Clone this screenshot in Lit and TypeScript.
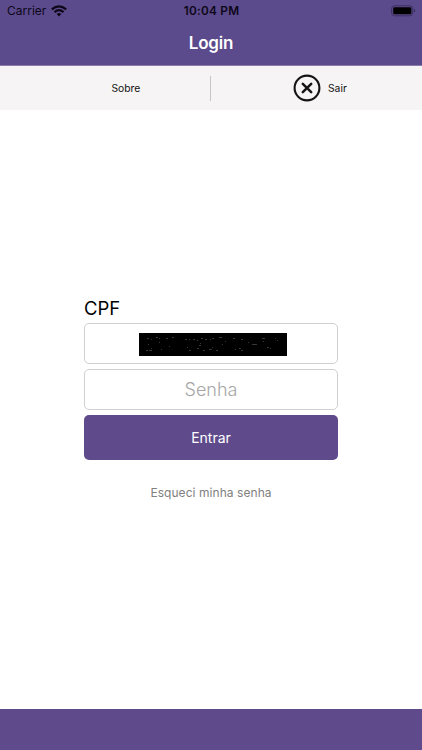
import { LitElement, html, css, svg } from "lit";
import { customElement } from "lit/decorators.js";

// Faint flecks on the masked CPF value: x, y, width.
const FLECKS = [
  [8, 5, 2], [12, 6, 1], [17, 4, 2], [20, 5, 1], [27, 5, 2], [33, 4, 2], [9, 11, 1], [20, 9, 1],
  [7, 17, 2], [10, 17, 3], [12, 15, 1], [22, 16, 1], [30, 13, 1], [46, 6, 2], [50, 6, 1],
  [54, 6, 2], [58, 7, 1], [62, 5, 2], [66, 6, 2], [71, 6, 1], [73, 5, 2], [80, 4, 3],
  [48, 14, 1], [50, 17, 2], [58, 15, 2], [60, 12, 2], [61, 10, 1], [64, 17, 2], [70, 16, 3],
  [73, 14, 1], [77, 17, 2], [83, 11, 1], [86, 8, 1], [94, 5, 2], [96, 16, 1], [102, 6, 2],
  [100, 15, 2], [102, 17, 2], [109, 9, 1], [113, 11, 3], [116, 11, 2], [123, 5, 3],
  [124, 8, 1], [128, 14, 2], [131, 15, 1], [136, 5, 1], [138, 7, 1],
];

@customElement("app-root")
export class AppRoot extends LitElement {
  static styles = css`
    :host { display: flex; flex-direction: column; height: 750px; background: #fff;
      font-family: Inter, "Liberation Sans", sans-serif; color: #000; line-height: 1; overflow: hidden; }
    .header { height: 65px; background: #5c4b8c; border-bottom: 1px solid #8c7cad; box-sizing: content-box; flex: none; }
    .status { display: grid; grid-template-columns: 1fr auto 1fr; height: 22px; align-items: center; padding: 0 6px 0 7px; color: #0c0718; }
    .carrier { display: flex; align-items: center; gap: 5px; font-size: 12px; }
    .time { font-size: 11.8px; font-weight: 600; letter-spacing: .25px; padding-top: 2px; }
    .battery { justify-self: end; display: block; }
    .wifi { display: block; }
    .title { margin: 0; text-align: center; font-size: 17px; font-weight: 600; line-height: 42px; color: #fff; letter-spacing: -.2px; }
    .toolbar { display: grid; grid-template-columns: 210px 1px 211px; align-items: center; height: 44px; flex: none; background: #f6f4f5; font-size: 10.3px; color: #111; }
    .sobre { padding: 1px 0 0 111.5px; }
    .divider { height: 25px; background: #c7c5c6; }
    .sair { display: flex; align-items: center; padding-left: 82px; gap: 7px; }
    .exit { padding-top: 1px; }
    .close { display: block; }
    .main { flex: 1; display: flex; flex-direction: column; align-items: center; padding-top: 187px; }
    .form { width: 254px; display: flex; flex-direction: column; }
    .label { font-size: 18.5px; line-height: 23px; height: 26px; }
    .field { box-sizing: border-box; height: 41px; border: 1px solid #d0d0d0; border-radius: 5px; display: flex; align-items: center; justify-content: center; margin-bottom: 5px; font-size: 18px; font-weight: 300; color: #a6a6a6; }
    .mask { display: block; background: #000; margin-left: 4px; margin-top: 1px; }
    .submit { height: 45px; border: 0; border-radius: 5px; background: #5f4b8b; color: #fff; font: 14px Inter, sans-serif; padding: 0; }
    .forgot { text-align: center; margin-top: 26px; font-size: 12px; line-height: 14px; letter-spacing: .06px; color: #808080; }
    .footer { height: 41px; flex: none; background: #5f4b8b; }
  `;

  render() {
    return html`
      <header class="header">
        <div class="status">
          <div class="carrier"><span>Carrier</span>
            <svg class="wifi" width="16" height="12" viewBox="0 0 16 12" fill="none" stroke="#0c0718">
              <path d="M.8 4.3Q8-1.6 15.2 4.3" stroke-width="2.3"/>
              <path d="M3.5 7.1Q8 3.2 12.5 7.1" stroke-width="2.1"/>
              <path d="M5.7 9Q8 7.1 10.3 9L8 11.4Z" fill="#0c0718" stroke="none"/>
            </svg>
          </div>
          <span class="time">10:04 PM</span>
          <svg class="battery" width="25" height="12" viewBox="0 0 25 12">
            <rect x=".6" y=".8" width="21.2" height="10" rx="3" fill="none" stroke="#3c2e62" stroke-width="1"/>
            <rect x="2.2" y="2.3" width="18.2" height="7" rx="1.4" fill="#000"/>
            <path d="M23 4.1q1.4.6 1.4 1.7T23 7.5Z" fill="#3c2e62"/>
          </svg>
        </div>
        <h1 class="title">Login</h1>
      </header>
      <nav class="toolbar">
        <span class="sobre">Sobre</span><span class="divider"></span>
        <span class="sair">
          <svg class="close" width="28" height="28" viewBox="0 0 28 28" fill="none" stroke="#151515">
            <circle cx="14" cy="14" r="12.4" stroke-width="2.1"/>
            <path d="M9.8 9.8l8.4 8.4M18.2 9.8l-8.4 8.4" stroke-width="2.5" stroke-linecap="round"/>
          </svg><span class="exit">Sair</span>
        </span>
      </nav>
      <main class="main">
        <div class="form">
          <span class="label">CPF</span>
          <div class="field">
            <svg class="mask" width="148" height="23" viewBox="0 0 148 23">
              ${FLECKS.map(([x, y, w]) => svg`<rect x=${x} y=${y} width=${w} height="1" fill="#383838"/>`)}
            </svg>
          </div>
          <div class="field">Senha</div>
          <button class="submit">Entrar</button>
          <span class="forgot">Esqueci minha senha</span>
        </div>
      </main>
      <footer class="footer"></footer>
    `;
  }
}
